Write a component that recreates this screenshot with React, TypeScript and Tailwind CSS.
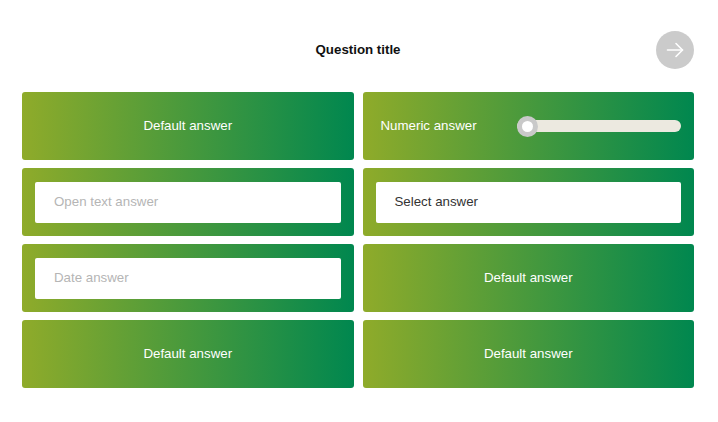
const card =
  "h-[68px] rounded-[3px] bg-[linear-gradient(90deg,#8fab2a,#00874f)] flex items-center";

function DefaultAnswer() {
  return (
    <div className={`${card} justify-center text-white text-[13.3px]`}>
      Default answer
    </div>
  );
}

function InputAnswer({ text, placeholder }: { text: string; placeholder?: boolean }) {
  return (
    <div className={`${card} px-[13px]`}>
      <div
        className={`h-[41px] w-full bg-white rounded-[2px] flex items-center pl-[19px] text-[13.3px] ${
          placeholder ? "text-[#b5b5b5]" : "text-[#333]"
        }`}
      >
        {text}
      </div>
    </div>
  );
}

export default function App() {
  return (
    <div
      className="w-[718px] h-[422px] bg-white pl-[22px] pr-[24px]"
      style={{ fontFamily: '"Liberation Sans", Arial, sans-serif' }}
    >
      {/* HEADER */}
      <div className="grid grid-cols-[1fr_auto_1fr] items-center pt-[31px] mb-[23px]">
        <div />
        <h1 className="text-[13.3px] font-bold text-[#111]">Question title</h1>
        <button className="justify-self-end w-[38px] h-[38px] rounded-full bg-[#cbcbcb] flex items-center justify-center">
          <svg width="20" height="20" viewBox="0 0 20 20" fill="none" stroke="white" strokeWidth="1.6" strokeLinecap="round" strokeLinejoin="round">
            <path d="M2.5 10h15" />
            <path d="M11 3.5L17.5 10 11 16.5" />
          </svg>
        </button>
      </div>

      {/* ANSWERS */}
      <div className="grid grid-cols-2 gap-x-[9px] gap-y-[8px]">
        <DefaultAnswer />

        <div className={`${card} pl-[18px] pr-[13px] text-white text-[13.3px]`}>
          <span>Numeric answer</span>
          <div className="relative ml-auto w-[164px] h-[21px] flex items-center">
            <div className="w-full h-[12px] rounded-full bg-[#ece9e0]" />
            <div className="absolute left-0 top-0 w-[21px] h-[21px] rounded-full bg-[#c9c9c9] flex items-center justify-center">
              <div className="w-[11px] h-[11px] rounded-full bg-white" />
            </div>
          </div>
        </div>

        <InputAnswer text="Open text answer" placeholder />
        <InputAnswer text="Select answer" />
        <InputAnswer text="Date answer" placeholder />
        <DefaultAnswer />
        <DefaultAnswer />
        <DefaultAnswer />
      </div>
    </div>
  );
}
